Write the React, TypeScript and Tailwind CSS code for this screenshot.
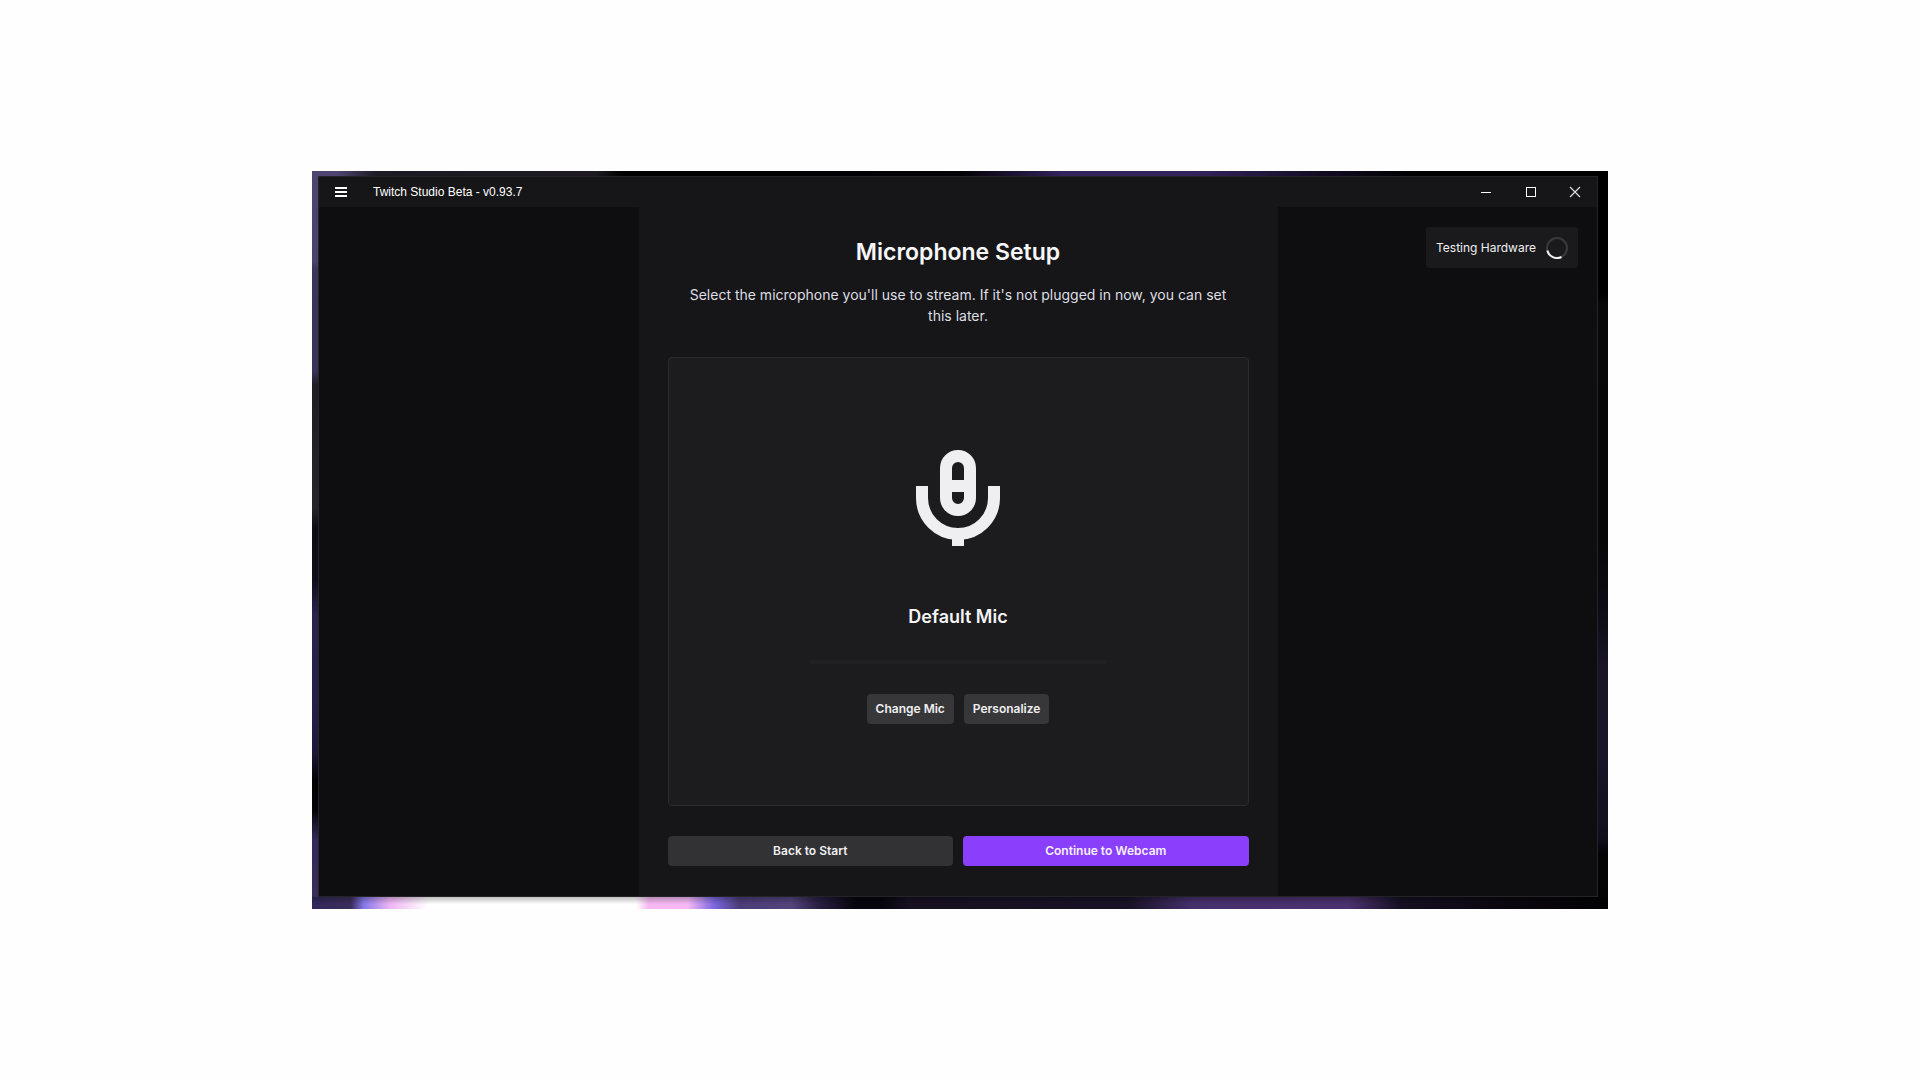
import React from "react";

function MicIcon() {
  return (
    <svg className="h-24 w-21" viewBox="0 0 84 96" fill="none" stroke="#efeff1" strokeWidth="12" aria-hidden="true">
      <rect x="30" y="6" width="24" height="54" rx="12" />
      <path d="M36 36h12" />
      <path d="M6 36v12a36 36 0 0 0 72 0V36" />
      <path d="M42 86v10" />
    </svg>
  );
}

function TitleBar() {
  return (
    <header className="flex h-[30px] items-center justify-between bg-[#161618]">
      <div className="flex items-center gap-[26px] pl-4">
        <button aria-label="Menu" className="flex w-3">
          <svg className="h-3 w-3" viewBox="0 0 12 12" stroke="#ffffff" strokeWidth="2" aria-hidden="true">
            <path d="M0 2h12M0 6h12M0 10h12" />
          </svg>
        </button>
        <span className="font-['Liberation_Sans',Arial,sans-serif] text-xs text-white">Twitch Studio Beta - v0.93.7</span>
      </div>
      <div className="flex h-full">
        <button aria-label="Minimize" className="flex w-[45px] items-center justify-center">
          <svg className="h-3 w-3" viewBox="0 0 12 12" stroke="#ffffff" aria-hidden="true">
            <path d="M1 6.5h10" />
          </svg>
        </button>
        <button aria-label="Maximize" className="flex w-[45px] items-center justify-center">
          <svg className="h-3 w-3" viewBox="0 0 12 12" fill="none" stroke="#ffffff" aria-hidden="true">
            <rect x="1.5" y="1.5" width="9" height="9" />
          </svg>
        </button>
        <button aria-label="Close" className="flex w-11 items-center justify-center">
          <svg className="h-3 w-3" viewBox="0 0 12 12" stroke="#e4e4e6" strokeWidth="1.1" aria-hidden="true">
            <path d="M1 1l10 10M11 1L1 11" />
          </svg>
        </button>
      </div>
    </header>
  );
}

export default function App() {
  return (
    <div className="flex min-h-screen items-center justify-center bg-[#fefefe] font-['Inter',sans-serif]">
      <div className="grid w-[67.5%] grid-cols-[6px_1fr_10px] bg-black">
        <div className="col-span-3 h-[5px] bg-[linear-gradient(90deg,#4d4470_0%,#4d4470_2%,#1c1a22_5%,#1c1a20_22%,#000_24%,#020104_50%,#33235c_58%,#33235c_68%,#120c22_78%,#000_85%)]" />
        <div className="bg-[linear-gradient(180deg,#4d4470_0%,#4a416c_12%,#3b3358_13%,#3a3258_27%,#1f1c24_29%,#26232c_46%,#0e0b16_49%,#100d1a_56%,#2b2250_61%,#241c48_75%,#1d1638_80%,#020103_84%,#06040a_88%,#33285a_92%,#3a2d5a_100%)]" />
        <main className="flex flex-col border border-[#242427] bg-[#0e0e10]">
          <TitleBar />
          <div className="grid grid-cols-4">
            <div />
            <section className="col-span-2 flex flex-col bg-[#161618] px-[29px] py-[30px]">
              <h1 className="text-center text-[23px] leading-[30px] font-semibold text-[#f7f7f8]">Microphone Setup</h1>
              <p className="mt-[17px] px-5 text-center text-sm leading-[21px] text-[#dedee3]">
                Select the microphone you'll use to stream. If it's not plugged in now, you can set this later.
              </p>
              <div className="mt-[31px] flex h-[449px] flex-col items-center rounded-[4px] border border-[#2b2b2e] bg-[#1c1c1e] pt-[92px]">
                <MicIcon />
                <h2 className="mt-[59px] text-lg leading-6 font-semibold text-[#f4f4f6]">Default Mic</h2>
                <div className="mt-[31px] h-1 w-[298px] rounded-sm bg-[#202022]" />
                <div className="mt-[30px] flex gap-[10px]">
                  <button className="h-[30px] rounded-[4px] bg-[#373739] px-[9px] text-xs font-semibold text-[#efeff1]">Change Mic</button>
                  <button className="h-[30px] rounded-[4px] bg-[#373739] px-[9px] text-xs font-semibold text-[#efeff1]">Personalize</button>
                </div>
              </div>
              <div className="mt-[30px] grid grid-cols-2 gap-[10px]">
                <button className="h-[30px] rounded-[4px] bg-[#323234] text-xs font-semibold text-[#efeff1]">Back to Start</button>
                <button className="h-[30px] rounded-[4px] bg-[#8a3ffc] text-xs font-semibold text-[#f7f0ff]">Continue to Webcam</button>
              </div>
            </section>
            <aside className="flex items-start justify-end pt-[20px] pr-[19px]">
              <div role="status" className="flex h-[41px] items-center gap-[10px] rounded-[3px] bg-[#1a1a1c] px-[10px] text-xs text-[#efeff1]">
                Testing Hardware
                <svg className="h-[22px] w-[22px]" viewBox="0 0 22 22" fill="none" strokeWidth="2" aria-hidden="true">
                  <circle cx="11" cy="11" r="10" stroke="#3a3a3d" />
                  <path d="M1.3 13.5A10 10 0 0 0 15.5 20" stroke="#efeff1" />
                </svg>
              </div>
            </aside>
          </div>
        </main>
        <div className="bg-[linear-gradient(180deg,#000_0%,#000_16%,#08080a_18%,#070709_50%,#0d0b14_60%,#1a1426_68%,#191428_80%,#110e1c_92%,#040306_94%,#030204_100%)]" />
        <div className="col-span-3 h-3 bg-[linear-gradient(180deg,rgba(0,0,0,0.25)_0%,transparent_60%),linear-gradient(90deg,#33285a_0%,#3a2d5a_3%,#8577e8_4%,#f0b5f5_6%,#fff_9%,#fff_25%,#f5b8f0_26%,#f5b8f5_29%,#7c68e0_31%,#4a3c78_33%,#53447c_37%,#2a2044_39%,#06040c_42%,#06040c_44%,#171022_46%,#181226_63%,#46306c_68%,#4a326e_80%,#150f22_84%,#0a070f_92%,#020103_100%)]" />
      </div>
    </div>
  );
}
